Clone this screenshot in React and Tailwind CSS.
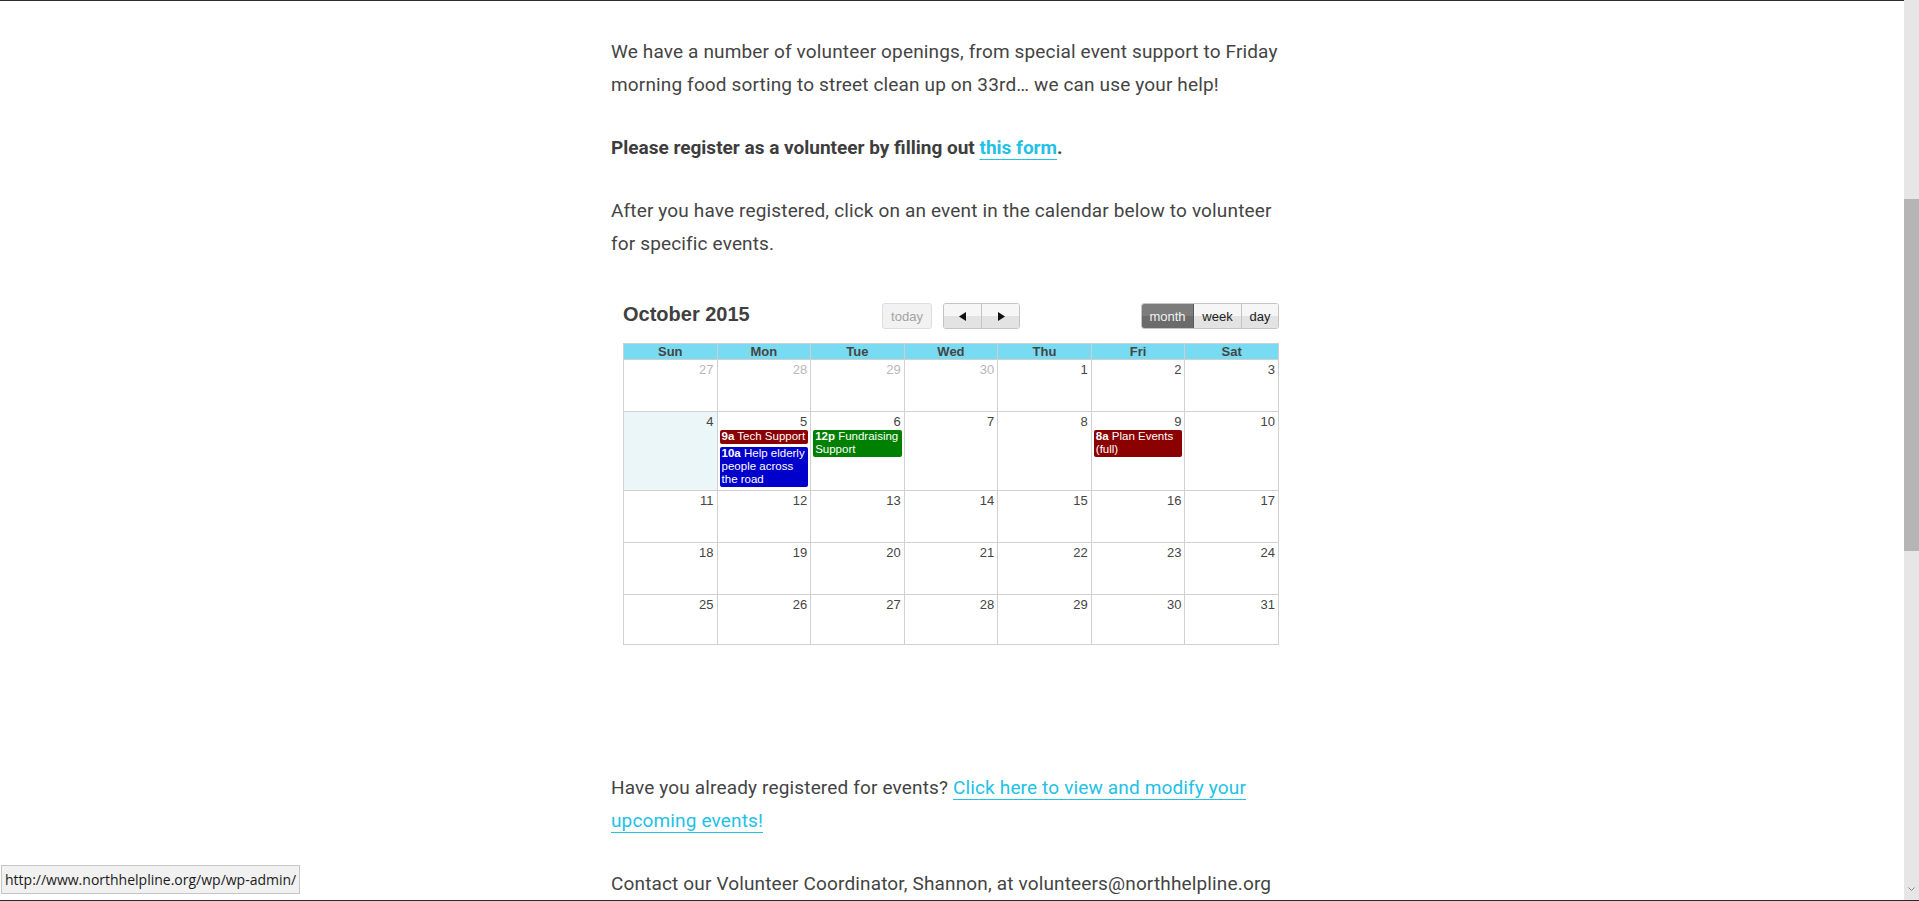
import React from "react";

const bodyFont = { fontFamily: "Roboto, 'Liberation Sans', sans-serif" };
const calFont = { fontFamily: "'Liberation Sans', Arial, sans-serif" };

const weeks = [
  [
    { d: 27, o: true },
    { d: 28, o: true },
    { d: 29, o: true },
    { d: 30, o: true },
    { d: 1 },
    { d: 2 },
    { d: 3 },
  ],
  [
    { d: 4, today: true },
    {
      d: 5,
      ev: [
        { c: "bg-[#8b0000] border-[#8b0000]", t: "9a", lines: ["Tech Support"] },
        { c: "bg-[#0000cd] border-[#0000cd]", t: "10a", lines: ["Help elderly", "people across", "the road"] },
      ],
    },
    { d: 6, ev: [{ c: "bg-[#008000] border-[#008000]", t: "12p", lines: ["Fundraising", "Support"] }] },
    { d: 7 },
    { d: 8 },
    { d: 9, ev: [{ c: "bg-[#8b0000] border-[#8b0000]", t: "8a", lines: ["Plan Events", "(full)"] }] },
    { d: 10 },
  ],
  [11, 12, 13, 14, 15, 16, 17].map((d) => ({ d })),
  [18, 19, 20, 21, 22, 23, 24].map((d) => ({ d })),
  [25, 26, 27, 28, 29, 30, 31].map((d) => ({ d })),
];

const rowH = ["h-[52px]", "", "h-[52px]", "h-[52px]", "h-[50px]"];

function Event({ e }) {
  return (
    <div className={`mx-[2px] mb-[3px] overflow-hidden rounded-[2px] px-[2px] pb-[1px] text-[11.5px] leading-[13px] text-white whitespace-nowrap ${e.c}`}>
      {e.lines.map((l, i) => (
        <div key={i}>
          {i === 0 ? (
            <>
              <span className="font-bold">{e.t}</span> {l}
            </>
          ) : (
            l
          )}
        </div>
      ))}
    </div>
  );
}

const grad = "bg-[linear-gradient(#f6f6f6_50%,#e3e3e3_50%)]";

function Calendar() {
  const heads = ["Sun", "Mon", "Tue", "Wed", "Thu", "Fri", "Sat"];
  return (
    <div className="ml-[12px] w-[656px]" style={calFont}>
      <div className="grid h-[26px] grid-cols-[1fr_auto_1fr] items-start">
        <h2 className="-mt-[2px] text-[20px] font-bold leading-[26px] text-[#404040]">October 2015</h2>
        <div className="flex items-start gap-[11px]">
          <div className="flex h-[26px] w-[50px] items-center justify-center rounded-[3px] border border-[#dedede] bg-[#f2f2f2] text-[13px] text-[#a3a3a3]">
            today
          </div>
          <div className="flex h-[26px] overflow-hidden rounded-[3px] border border-[#c4c4c4]">
            <div className={`flex w-[38px] items-center justify-center border-r border-[#c4c4c4] ${grad}`}>
              <svg width="8" height="9" viewBox="0 0 8 9"><polygon points="7,0 7,9 0,4.5" fill="#111" /></svg>
            </div>
            <div className={`flex w-[37px] items-center justify-center ${grad}`}>
              <svg width="8" height="9" viewBox="0 0 8 9"><polygon points="1,0 1,9 8,4.5" fill="#111" /></svg>
            </div>
          </div>
        </div>
        <div className="flex justify-end">
          <div className="flex h-[26px] overflow-hidden rounded-[3px] border border-[#c4c4c4] text-[13px]">
            <div className="flex w-[52px] items-center justify-center border-r border-[#5a5a5a] bg-[linear-gradient(#7c7c7c_50%,#6b6b6b_50%)] text-[#f2f2f2]">
              month
            </div>
            <div className={`flex w-[48px] items-center justify-center border-r border-[#c4c4c4] text-[#222] ${grad}`}>
              week
            </div>
            <div className={`flex w-[36px] items-center justify-center text-[#222] ${grad}`}>
              day
            </div>
          </div>
        </div>
      </div>

      <table className="mt-[14px] w-[656px] table-fixed border-collapse">
        <thead>
          <tr>
            {heads.map((h) => (
              <th key={h} className="h-[16px] border border-[#cfcfcf] bg-[#79dbf2] p-0 text-center text-[13px] font-bold leading-[14px] text-[#454545]">
                {h}
              </th>
            ))}
          </tr>
        </thead>
        <tbody>
          {weeks.map((w, wi) => (
            <tr key={wi}>
              {w.map((c, ci) => (
                <td
                  key={ci}
                  className={`${rowH[wi]} border border-[#d0d0d0] p-0 align-top ${c.today ? "bg-[#eaf6f8]" : "bg-white"}`}
                >
                  <div className={`pr-[3px] pt-[2px] text-right text-[13px] leading-[15px] ${c.o ? "text-[#b8b8b8]" : "text-[#444]"}`}>
                    {c.d}
                  </div>
                  {c.ev && (
                    <div className="mt-[1px]">
                      {c.ev.map((e, i) => (
                        <Event key={i} e={e} />
                      ))}
                    </div>
                  )}
                </td>
              ))}
            </tr>
          ))}
        </tbody>
      </table>
    </div>
  );
}

const link = "text-[#22c1e6] underline decoration-[#22c1e6] decoration-1 underline-offset-[5px]";

export default function App() {
  return (
    <div className="relative flex h-[901px] w-[1919px] overflow-hidden bg-white">
      <div className="flex min-w-0 flex-1 flex-col">
        <div className="h-px w-full shrink-0 bg-[#2e2e2e]" />
        <div className="pl-[611px] pt-[34px] text-[19px] leading-[33px] tracking-[0.15px] text-[#444] whitespace-nowrap" style={bodyFont}>
          <p>
            We have a number of volunteer openings, from special event support to Friday
            <br />
            morning food sorting to street clean up on 33rd… we can use your help!
          </p>
          <p className="mt-[30px] font-bold tracking-normal text-[#3d3d3d]">
            Please register as a volunteer by filling out <span className={link}>this form</span>.
          </p>
          <p className="mt-[30px]">
            After you have registered, click on an event in the calendar below to volunteer
            <br />
            for specific events.
          </p>
          <div className="mt-[43px]" />
          <div className="tracking-normal">
            <Calendar />
          </div>
          <p className="mt-[126px]">
            Have you already registered for events?{" "}
            <span className={link}>
              Click here to view and modify your
              <br />
              upcoming events!
            </span>
          </p>
          <p className="mt-[30px]">Contact our Volunteer Coordinator, Shannon, at volunteers@northhelpline.org</p>
        </div>
      </div>

      <div className="relative flex h-full w-[15px] shrink-0 flex-col bg-[#e6e6e6]">
        <div className="h-[199px] shrink-0" />
        <div className="h-[352px] shrink-0 bg-[#b5b5b5]" />
        <div className="flex-1" />
        <div className="flex h-[14px] items-start justify-center">
          <svg width="7" height="4" viewBox="0 0 7 4"><polyline points="0.5,0.5 3.5,3.5 6.5,0.5" fill="none" stroke="#8a8a8a" strokeWidth="1" /></svg>
        </div>
      </div>

      <div
        className="absolute left-[1px] top-[865px] h-[29px] border border-[#c6c6c6] bg-[#f1f1f1] px-[3px] text-[14px] leading-[27px] text-[#1b1b1b]"
        style={{ fontFamily: "'Open Sans', 'Noto Sans', sans-serif" }}
      >
        http://www.northhelpline.org/wp/wp-admin/
      </div>
      <div className="absolute bottom-0 left-0 h-px w-full bg-[#2a2a2a]" />
    </div>
  );
}
